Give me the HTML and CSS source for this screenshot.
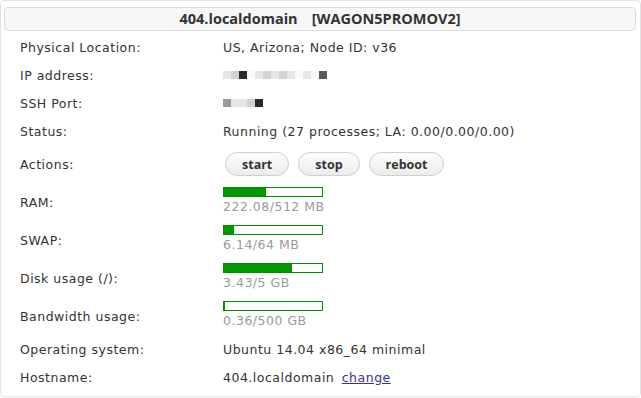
FILE: index.html
```html
<!DOCTYPE html>
<html>
<head>
<meta charset="utf-8">
<link rel="stylesheet" href="styles.css">
</head>
<body>
<div class="panel">
  <div class="title">404.localdomain<span class="gap"></span>[WAGON5PROMOV2]</div>
  <div class="rows">
    <div class="row"><div class="label">Physical Location:</div><div class="value">US, Arizona; Node ID: v36</div></div>
    <div class="row"><div class="label">IP address:</div><div class="value">
      <span class="pix">
        <i class="p1"></i><i class="p2"></i><i class="p5"></i><i class="p0"></i><i class="p1"></i><i class="p2"></i><i class="p1"></i><i class="p2"></i><i class="p1"></i><i class="p0"></i><i class="p1"></i><i class="p0"></i><i class="p4"></i>
      </span>
    </div></div>
    <div class="row"><div class="label">SSH Port:</div><div class="value">
      <span class="pix">
        <i class="p3"></i><i class="p1"></i><i class="p1"></i><i class="p2"></i><i class="p5"></i>
      </span>
    </div></div>
    <div class="row"><div class="label">Status:</div><div class="value">Running (27 processes; LA: 0.00/0.00/0.00)</div></div>
    <div class="row tall"><div class="label">Actions:</div><div class="value actions">
      <button class="btn">start</button><button class="btn">stop</button><button class="btn">reboot</button>
    </div></div>
    <div class="row tall"><div class="label">RAM:</div><div class="value meter">
      <div class="bar"><div class="fill" style="width:43%"></div></div>
      <div class="usage">222.08/512 MB</div>
    </div></div>
    <div class="row tall"><div class="label">SWAP:</div><div class="value meter">
      <div class="bar"><div class="fill" style="width:10%"></div></div>
      <div class="usage">6.14/64 MB</div>
    </div></div>
    <div class="row tall"><div class="label">Disk usage (/):</div><div class="value meter">
      <div class="bar"><div class="fill" style="width:69%"></div></div>
      <div class="usage">3.43/5 GB</div>
    </div></div>
    <div class="row tall"><div class="label">Bandwidth usage:</div><div class="value meter">
      <div class="bar"><div class="fill" style="width:1%"></div></div>
      <div class="usage">0.36/500 GB</div>
    </div></div>
    <div class="row"><div class="label">Operating system:</div><div class="value">Ubuntu 14.04 x86_64 minimal</div></div>
    <div class="row"><div class="label">Hostname:</div><div class="value inline">404.localdomain <a class="link" href="#">change</a></div></div>
  </div>
</div>
</body>
</html>
```
FILE: styles.css
```css
html, body {
  margin: 0;
  padding: 0;
  background: #fff;
}
body {
  font-family: "DejaVu Sans", Verdana, sans-serif;
  font-size: 12.5px;
  letter-spacing: 0.5px;
  color: #333;
}
.panel {
  width: 639px;
  height: 395px;
  border: 1px solid #e3e3e3;
  border-radius: 4px;
  box-sizing: content-box;
}
.title {
  margin: 6px 4px 0 3px;
  height: 22px;
  border: 1px solid #dcdcdc;
  border-radius: 4px;
  background: #f7f7f7;
  text-align: center;
  font-family: "Open Sans", sans-serif;
  font-weight: 700;
  font-size: 14.5px;
  letter-spacing: 0;
  line-height: 22px;
  color: #333;
}
.gap {
  display: inline-block;
  width: 14px;
}
.rows {
  padding-top: 2px;
}
.row {
  display: grid;
  grid-template-columns: 203px 1fr;
  align-items: center;
  height: 28px;
  padding-left: 19px;
}
.row.tall {
  height: 38px;
}
.value {
  display: flex;
  flex-direction: column;
  align-items: flex-start;
}
.value.meter {
  padding-bottom: 4px;
}
.value.inline {
  display: block;
}
.value.actions {
  flex-direction: row;
  align-items: center;
  gap: 0;
  padding-left: 2px;
}
.btn {
  font-family: "Open Sans", sans-serif;
  font-weight: 700;
  font-size: 12.5px;
  letter-spacing: 0;
  color: #333;
  height: 24px;
  padding: 0 16px;
  margin-right: 9px;
  border: 1px solid #d0d0d0;
  border-radius: 12px;
  background: linear-gradient(#fdfdfd, #ececec);
}
.bar {
  width: 98px;
  height: 8px;
  border: 1px solid #009000;
  background: #fff;
}
.fill {
  height: 100%;
  background: #009900;
}
.usage {
  color: #9a9a9a;
  margin-top: 2px;
  line-height: 15px;
}
.pix {
  display: flex;
  align-items: center;
  height: 10px;
}
.pix i {
  display: block;
  width: 8px;
  height: 8px;
}
.p0 { background: #fbfbfb; }
.p1 { background: #e6e6e6; }
.p2 { background: #d2d2d2; }
.p3 { background: #9a9a9a; }
.p4 { background: #5a5a5a; }
.p5 { background: #2a2a2a; }
.link {
  color: #333399;
  text-decoration: underline;
  margin-left: 3px;
}
```
